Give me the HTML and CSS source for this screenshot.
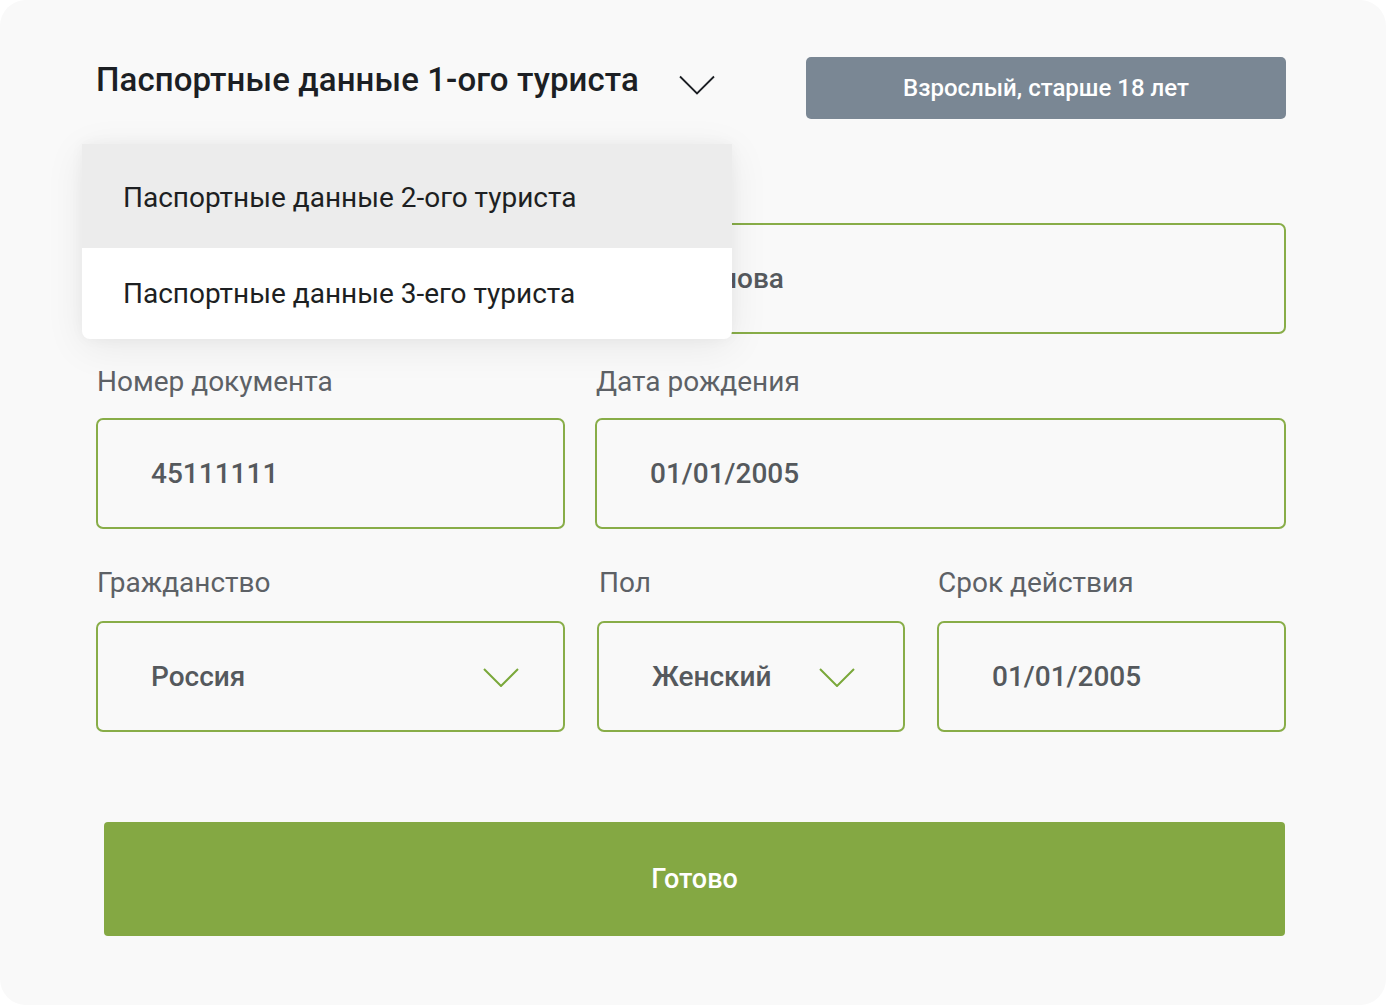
FILE: index.html
```html
<!DOCTYPE html>
<html lang="ru">
<head>
<meta charset="utf-8">
<title>Паспортные данные</title>
<link rel="stylesheet" href="styles.css">
</head>
<body>
<div class="card">
  <div class="header">
    <div class="title-wrap">
      <h1 class="title">Паспортные данные 1-ого туриста</h1>
      <svg class="title-chevron" width="36" height="20" viewBox="0 0 36 20"><polyline points="1,1.5 18,18.5 35,1.5" fill="none" stroke="#1c1f24" stroke-width="1.8"/></svg>
    </div>
    <div class="badge">Взрослый, старше 18 лет</div>
  </div>

  <div class="menu">
    <div class="menu-item active">Паспортные данные 2-ого туриста</div>
    <div class="menu-item">Паспортные данные 3-его туриста</div>
  </div>

  <div class="form">
    <div class="row row-2col">
      <div class="field">
        <div class="label"></div>
        <div class="input"></div>
      </div>
      <div class="field">
        <div class="label"></div>
        <div class="input">Смирнова</div>
      </div>
    </div>
    <div class="row row-2col">
      <div class="field">
        <div class="label">Номер документа</div>
        <div class="input">45111111</div>
      </div>
      <div class="field">
        <div class="label">Дата рождения</div>
        <div class="input">01/01/2005</div>
      </div>
    </div>
    <div class="row row-3col">
      <div class="field">
        <div class="label">Гражданство</div>
        <div class="input select select-wide">Россия
          <svg class="chev" width="36" height="19" viewBox="0 0 36 19"><polyline points="1,1 18,18 35,1" fill="none" stroke="#7aa83a" stroke-width="2"/></svg>
        </div>
      </div>
      <div class="field field-mid">
        <div class="label">Пол</div>
        <div class="input select select-narrow">Женский
          <svg class="chev" width="36" height="19" viewBox="0 0 36 19"><polyline points="1,1 18,18 35,1" fill="none" stroke="#7aa83a" stroke-width="2"/></svg>
        </div>
      </div>
      <div class="field">
        <div class="label">Срок действия</div>
        <div class="input">01/01/2005</div>
      </div>
    </div>
  </div>

  <button class="submit">Готово</button>
</div>
</body>
</html>
```

FILE: styles.css
```css
* { box-sizing: border-box; }

html, body {
  margin: 0;
  padding: 0;
  background: #ffffff;
}

body {
  font-family: Roboto, "Noto Sans", Arial, sans-serif;
  width: 1387px;
  height: 1006px;
  overflow: hidden;
}

.card {
  position: relative;
  width: 1386px;
  height: 1005px;
  background: #f9f9f9;
  border-radius: 26px;
  padding: 57px 100px 0 96px;
}

.header {
  display: flex;
  align-items: flex-start;
  height: 62px;
}

.title-wrap {
  display: flex;
  align-items: flex-start;
}

.title {
  margin: 0;
  font-size: 33px;
  line-height: 46px;
  font-weight: 500;
  color: #1c1f24;
  letter-spacing: 0.1px;
}

.title-chevron {
  margin-left: 40px;
  margin-top: 18px;
}

.badge {
  margin-left: auto;
  width: 480px;
  height: 62px;
  background: #7a8794;
  border-radius: 5px;
  color: #ffffff;
  font-size: 24px;
  font-weight: 500;
  display: flex;
  align-items: center;
  justify-content: center;
  padding-bottom: 1px;
}

.menu {
  position: absolute;
  left: 82px;
  top: 144px;
  width: 650px;
  background: #ffffff;
  border-radius: 0 0 8px 8px;
  box-shadow: 0 8px 40px rgba(0, 0, 0, 0.07), 0 0 14px rgba(0, 0, 0, 0.04);
  z-index: 5;
  overflow: hidden;
}

.menu-item {
  height: 91px;
  display: flex;
  align-items: center;
  padding-left: 41px;
  font-size: 28px;
  color: #1d1f22;
}

.menu-item.active {
  height: 104px;
  background: #ececec;
  padding-top: 2px;
}

.form {
  margin-top: 53px;
  display: flex;
  flex-direction: column;
  gap: 33px;
}

.row {
  display: grid;
}

.row-2col {
  grid-template-columns: 469px 1fr;
  column-gap: 30px;
}

.row-3col {
  grid-template-columns: 469px 308px 349px;
  column-gap: 32px;
  margin-top: 6px;
}

.field-mid .label {
  padding-left: 2px;
}

.label {
  height: 30px;
  font-size: 28px;
  line-height: 30px;
  color: #5d6166;
  padding-left: 1px;
  margin-bottom: 21px;
}

.row-3col .label {
  margin-bottom: 23px;
}

.input {
  height: 111px;
  border: 2px solid #88ad48;
  border-radius: 7px;
  padding-left: 53px;
  display: flex;
  align-items: center;
  font-size: 28px;
  font-weight: 500;
  color: #55595d;
}

.select {
  justify-content: space-between;
}

.select-wide {
  padding-right: 44px;
}

.select-narrow {
  padding-right: 48px;
}

.chev {
  display: block;
  margin-top: 2px;
}

.submit {
  display: block;
  margin: 90px 0 0 8px;
  width: 1181px;
  height: 114px;
  border: none;
  border-radius: 4px;
  background: #84a843;
  color: #ffffff;
  font-family: Roboto, "Noto Sans", Arial, sans-serif;
  font-size: 27px;
  font-weight: 500;
  padding: 0;
}
```
